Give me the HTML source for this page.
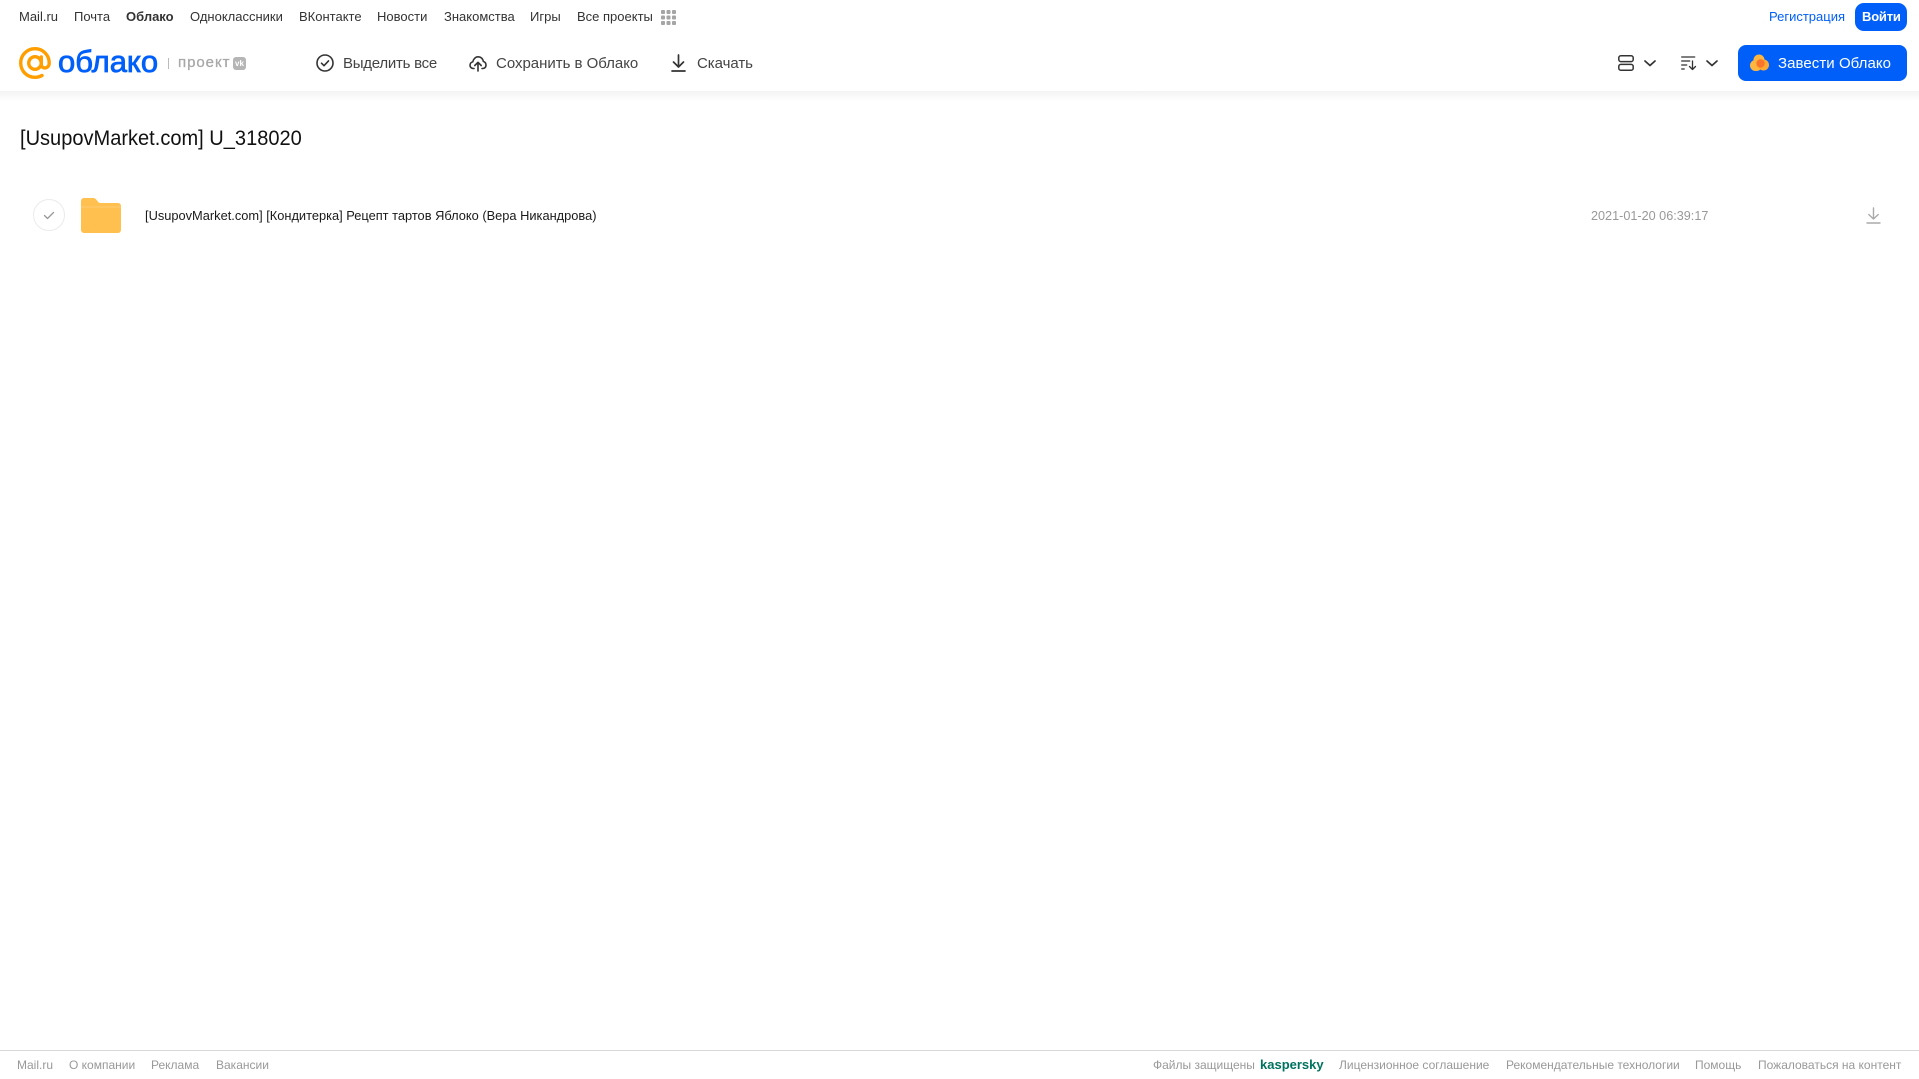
<!DOCTYPE html>
<html lang="ru"><head><meta charset="utf-8"><title>Облако</title>
<style>
html,body{margin:0;padding:0;background:#fff;width:1919px;height:1079px;overflow:hidden;font-family:"Liberation Sans","DejaVu Sans",sans-serif}
.t{position:absolute;white-space:nowrap;line-height:20px;transform:translateY(-10px);transform-origin:left center}
.n{font-size:13px;color:#333;top:17px}
.h{font-size:15px;color:#444;top:64px}
.f{font-size:12px;color:#999;top:1065px}
svg{position:absolute;overflow:visible}
#shade{position:absolute;left:0;top:91px;width:1919px;height:10px;background:linear-gradient(#f3f3f3,#fff)}
</style></head><body>
<div id="shade"></div>
<span class="t n" style="left:19px">Mail.ru</span>
<span class="t n" style="left:74px">Почта</span>
<span class="t n" style="left:126px;font-weight:bold">Облако</span>
<span class="t n" style="left:190px">Одноклассники</span>
<span class="t n" style="left:299px">ВКонтакте</span>
<span class="t n" style="left:377px">Новости</span>
<span class="t n" style="left:444px">Знакомства</span>
<span class="t n" style="left:530px">Игры</span>
<span class="t n" style="left:577px">Все проекты</span>
<svg style="left:661px;top:10px" width="15" height="15" fill="#a5a5a5"><rect x="0" y="0" width="4" height="4" rx="1"/><rect x="5.500" y="0" width="4" height="4" rx="1"/><rect x="11" y="0" width="4" height="4" rx="1"/><rect x="0" y="5.500" width="4" height="4" rx="1"/><rect x="5.500" y="5.500" width="4" height="4" rx="1"/><rect x="11" y="5.500" width="4" height="4" rx="1"/><rect x="0" y="11" width="4" height="4" rx="1"/><rect x="5.500" y="11" width="4" height="4" rx="1"/><rect x="11" y="11" width="4" height="4" rx="1"/></svg>
<span class="t n" style="left:1769px;color:#005ff9">Регистрация</span>
<div style="position:absolute;left:1855px;top:3px;width:52px;height:28px;border-radius:9px;background:#005ff9"></div>
<span class="t n" style="left:1862px;color:#fff;font-weight:bold;letter-spacing:-.2px">Войти</span>

<svg style="left:19px;top:47px" width="32" height="32" viewBox="0 0 32 32" fill="none" stroke="#ff9e00" stroke-width="3.400" stroke-linecap="round"><circle cx="16" cy="16" r="6.300"/><path d="M22.300 10v7.500c0 4.800 7.900 4.800 7.900-1.500C30.200 8 23.800 1.700 16 1.700S1.700 8 1.700 16 8 30.300 16 30.300c2.800 0 5-.6 7-1.800"/></svg>
<span class="t" style="left:58px;top:62px;font-size:31px;color:#005ff9;-webkit-text-stroke:.8px #005ff9">облако</span>
<div style="position:absolute;left:168px;top:58px;width:1px;height:11px;background:#bbb"></div>
<span class="t" style="left:178px;top:63px;font-size:15px;color:#a8a8a8;letter-spacing:.95px;-webkit-text-stroke:.3px #a8a8a8">проект</span>
<div style="position:absolute;left:233px;top:57px;width:13px;height:13px;border-radius:3px;background:#b5b5b5;color:#fff;font:bold 8px/13px 'Liberation Sans',sans-serif;text-align:center">vk</div>

<svg style="left:316px;top:54px" width="18" height="18" viewBox="0 0 18 18" fill="none" stroke="#333" stroke-width="1.600"><circle cx="9" cy="9" r="8"/><path d="M5.500 9.200l2.500 2.500 4.500-4.800" stroke-linecap="round" stroke-linejoin="round"/></svg>
<span class="t h" style="left:343px;letter-spacing:-.25px">Выделить все</span>
<svg style="left:469px;top:54px" width="18" height="18" viewBox="0 0 18 18" fill="none" stroke="#333" stroke-width="1.600" stroke-linecap="round" stroke-linejoin="round"><path d="M5 14.500H4.300C2.400 14.500 1 13 1 11.200c0-1.700 1.200-3 2.800-3.300C4.300 5 6.400 2.800 9.200 2.800c2.700 0 4.800 2 5.200 4.700 1.500.4 2.600 1.900 2.600 3.700 0 1.800-1.400 3.300-3.200 3.300H13"/><path d="M9 17V8.500M5.800 11.500L9 8.300l3.200 3.200"/></svg>
<span class="t h" style="left:496px;letter-spacing:-.02px">Сохранить в Облако</span>
<svg style="left:671px;top:54px" width="15" height="18" viewBox="0 0 15 18" fill="none" stroke="#333" stroke-width="1.700" stroke-linecap="round" stroke-linejoin="round"><path d="M7.500 1v11.500M2.500 8l5 5 5-5M1 17h13"/></svg>
<span class="t h" style="left:697px;letter-spacing:-.05px">Скачать</span>

<svg style="left:1618px;top:55px" width="16" height="16" viewBox="0 0 16 16" fill="none" stroke="#333" stroke-width="1.500"><rect x=".8" y=".8" width="14.400" height="5.800" rx="2"/><rect x=".8" y="9.400" width="14.400" height="5.800" rx="2"/></svg>
<svg style="left:1644px;top:60px" width="12" height="7" viewBox="0 0 12 7" fill="none" stroke="#333" stroke-width="1.700" stroke-linecap="round" stroke-linejoin="round"><path d="M1 1l5 4.500L11 1"/></svg>
<svg style="left:1681px;top:56px" width="16" height="15" viewBox="0 0 16 15" fill="none" stroke="#333" stroke-width="1.300" stroke-linecap="round" stroke-linejoin="round"><path d="M.7 1h13M.7 5h8M.7 9h5M.7 13h2.500M11.500 5v8.500M8.500 10.500l3 3 3-3"/></svg>
<svg style="left:1706px;top:60px" width="12" height="7" viewBox="0 0 12 7" fill="none" stroke="#333" stroke-width="1.700" stroke-linecap="round" stroke-linejoin="round"><path d="M1 1l5 4.500L11 1"/></svg>
<div style="position:absolute;left:1738px;top:45px;width:169px;height:36px;border-radius:8px;background:#005ff9"></div>
<svg style="left:1750px;top:54px" width="19" height="17" viewBox="0 0 19 17"><circle cx="9" cy="6" r="5.500" fill="#ffb63e"/><rect x="0" y="6" width="12" height="11" rx="5.500" fill="#ffb63e"/><circle cx="13.500" cy="11" r="5.500" fill="#ffa931"/><circle cx="10.500" cy="9.500" r="4.200" fill="#f9752c"/></svg>
<span class="t h" style="left:1778px;color:#fff;letter-spacing:.06px">Завести Облако</span>

<span class="t" style="left:20px;top:137.500px;font-size:21.500px;color:#111;transform:translateY(-10px) scaleX(.932)">[UsupovMarket.com] U_318020</span>

<svg style="left:33px;top:199px" width="32" height="32" viewBox="0 0 32 32" fill="none"><circle cx="16" cy="16" r="15.500" stroke="#ebebeb"/><path d="M11.500 16.500l3 3 6-6" stroke="#999" stroke-width="1.300" stroke-linecap="round" stroke-linejoin="round"/></svg>
<svg style="left:81px;top:198px" width="40" height="35" viewBox="0 0 40 35"><path d="M0 3a3 3 0 0 1 3-3h9c2 0 3 1 4 2.500S18 5 20 5h17a3 3 0 0 1 3 3v24a3 3 0 0 1-3 3H3a3 3 0 0 1-3-3z" fill="#ffc04f"/><path d="M0 8h40v2H0z" fill="#ffc560"/></svg>
<span class="t" style="left:145px;top:216px;font-size:12.830px;color:#1a1a1a">[UsupovMarket.com] [Кондитерка] Рецепт тартов Яблоко (Вера Никандрова)</span>
<span class="t" style="left:1591px;top:216px;font-size:12.650px;color:#999">2021-01-20 06:39:17</span>
<svg style="left:1866px;top:207px" width="15" height="17" viewBox="0 0 15 17" fill="none" stroke="#aaa" stroke-width="1.400" stroke-linecap="round" stroke-linejoin="round"><path d="M7.500 1v10.500M2.800 7.500l4.700 4.500 4.700-4.500M1 16h13"/></svg>

<div style="position:absolute;left:0;top:1050px;width:1919px;height:1px;background:#d8d8d8"></div>
<span class="t f" style="left:17px">Mail.ru</span>
<span class="t f" style="left:69px">О компании</span>
<span class="t f" style="left:151px">Реклама</span>
<span class="t f" style="left:216px">Вакансии</span>
<span class="t f" style="left:1153px">Файлы защищены</span>
<span class="t f" style="left:1260px;color:#00735f;font-weight:bold;font-size:13px">kaspersky</span>
<span class="t f" style="left:1339px">Лицензионное соглашение</span>
<span class="t f" style="left:1506px">Рекомендательные технологии</span>
<span class="t f" style="left:1695px">Помощь</span>
<span class="t f" style="left:1758px">Пожаловаться на контент</span>
</body></html>
